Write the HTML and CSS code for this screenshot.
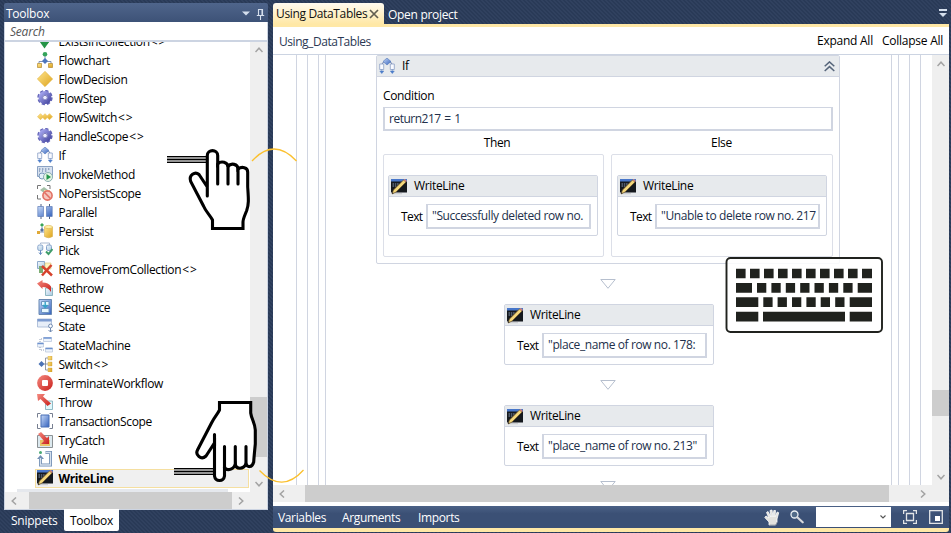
FILE: index.html
```
<!DOCTYPE html>
<html lang="en">
<head>
<meta charset="utf-8">
<title>Using DataTables</title>
<link rel="stylesheet" href="styles.css">
</head>
<body>
<svg class="defs" width="0" height="0" aria-hidden="true">
  <defs>
    <linearGradient id="gold" x1="0" y1="0" x2="1" y2="1"><stop offset="0" stop-color="#ffe58c"/><stop offset="1" stop-color="#dda31d"/></linearGradient>
    <linearGradient id="blue" x1="0" y1="0" x2="1" y2="1"><stop offset="0" stop-color="#c8daf8"/><stop offset="1" stop-color="#3462bd"/></linearGradient>
    <linearGradient id="pale" x1="0" y1="0" x2="1" y2="1"><stop offset="0" stop-color="#f4faff"/><stop offset="1" stop-color="#a9c8e0"/></linearGradient>
    <linearGradient id="red" x1="0" y1="0" x2="1" y2="1"><stop offset="0" stop-color="#f58a80"/><stop offset="1" stop-color="#c9201c"/></linearGradient>
    <linearGradient id="violet" x1="0" y1="0" x2="1" y2="1"><stop offset="0" stop-color="#a5a6ee"/><stop offset="1" stop-color="#4c4da6"/></linearGradient>
    <symbol id="exists" viewBox="0 0 16 16"><path d="M6 0h5v5h2v3l-5 5-5-5 3-3z" fill="#39a457"/><path d="M1.500 7l6 8.500 6-8.500" fill="#259447"/></symbol>
    <symbol id="flowchart" viewBox="0 0 16 16"><path d="M8 4v5M2 12V9.500h12V12" fill="none" stroke="#8192b5"/><circle cx="8" cy="2.300" r="2.300" fill="#35a45b"/><path d="M8 6l3 3-3 3-3-3z" fill="#4b75bd"/><path d="M.5 11.500h4v4h-4zM11.500 11.500h4v4h-4z" fill="url(#gold)" stroke="#b58b32" stroke-width=".7"/></symbol>
    <symbol id="decision" viewBox="0 0 16 16"><path d="M8 .3L15.700 8 8 15.700.3 8z" fill="url(#gold)" stroke="#dfae37" stroke-width=".5"/></symbol>
    <symbol id="gear" viewBox="0 0 16 16"><circle cx="8" cy="7.600" r="6.600" fill="none" stroke="#6566b8" stroke-width="2.200" stroke-dasharray="3.200 1.984"/><circle cx="8" cy="7.600" r="4.500" fill="none" stroke="url(#violet)" stroke-width="4"/><circle cx="8" cy="7.600" r="2.300" fill="#ececff" stroke="#4c4d9e" stroke-width=".7"/></symbol>
    <symbol id="flowswitch" viewBox="0 0 16 16"><path d="M3.500 4.700L6.500 7.700l-3 3-3-3zM8 4.700l3 3-3 3-3-3zM12.500 4.700l3 3-3 3-3-3z" fill="url(#gold)" stroke="#edc35b" stroke-width=".7"/></symbol>
    <symbol id="if" viewBox="0 0 16 16"><path d="M3 6l1.500-2H6M13 6l-1.500-2H10" fill="none" stroke="#6b7fae"/><path d="M8 0l4 3.500L8 7 4 3.500z" fill="url(#blue)" stroke="#5278b9" stroke-width=".6"/><path d="M.7 6h4v5.500h-4zM11.300 6h4v5.500h-4z" fill="#f8faff" stroke="#8b9fc5" stroke-width=".8"/><path d="M2.700 11.500v3M13.300 11.500v3M.8 13h4l-2 2.600zM11.300 13h4l-2 2.600z" fill="#4c7cc9" stroke="#4c7cc9" stroke-width=".5"/></symbol>
    <symbol id="invoke" viewBox="0 0 16 16"><path d="M.5.5h15v10H.5z" fill="#d7e1ef" stroke="#8ba2c3"/><path d="M2 3h2m1 0h2m1 0h2m1 0h2M2 5h1m2 0h1m2 0h2" stroke="#55729e" stroke-dasharray="1 .6"/><circle cx="5" cy="10" r="3" fill="#e4eff9" stroke="#7796b9"/><circle cx="11" cy="11" r="4.500" fill="#e5f4e4" stroke="#8baeb1"/><path d="M9.500 8l4.500 3-4.500 3z" fill="#24964a"/></symbol>
    <symbol id="nopersist" viewBox="0 0 16 16"><path d="M.5 4V.5H4M10 .5h3V4M.5 10v4H4" fill="none" stroke="#777"/><path d="M3 5l4-3 4 3-4 3z" fill="#a3c0a7"/><path d="M7 5h6v9H7z" fill="#f2dca6"/><circle cx="10.500" cy="10.500" r="4.600" fill="#f5c7bd" stroke="#e27063" stroke-width="1.600"/><path d="M7.500 7.500l6 6" stroke="#e27063" stroke-width="1.600"/></symbol>
    <symbol id="parallel" viewBox="0 0 16 16"><path d="M4 0v15M12.500 0v15" stroke="#4c5e82"/><path d="M.8 2.500h5.700v10H.8zM9.500 2.500h5.700v10H9.500z" fill="url(#blue)" stroke="#5f7db8" stroke-width=".7"/></symbol>
    <symbol id="persist" viewBox="0 0 16 16"><path d="M5 4v4M1 9h6" stroke="#7890b5"/><path d="M5 0l2 2-2 2-2-2z" fill="#39a457"/><path d="M5 5l2 2-2 2-2-2z" fill="#536f9c"/><path d="M0 8h3v3H0z" fill="#e0a937"/><path d="M7.500 4v9.500q4 2.500 8 0V4z" fill="url(#gold)" stroke="#d6ae49" stroke-width=".6"/><ellipse cx="11.500" cy="4" rx="4" ry="1.600" fill="#fff0a9" stroke="#d8b24b" stroke-width=".6"/></symbol>
    <symbol id="pick" viewBox="0 0 16 16"><path d="M3.500 2V1h9v2" fill="none" stroke="#a9b9d0"/><rect x=".8" y="3" width="5" height="5.500" rx="1.500" fill="url(#pale)" stroke="#86a4cb"/><rect x="9.500" y="3" width="5" height="5.500" rx="1.500" fill="url(#pale)" stroke="#86a4cb"/><path d="M3.500 8.500v4M2 10.500l1.500 2 1.500-2" fill="none" stroke="#6289be"/><path d="M9 9.500l2.500 2.500 4-5" fill="none" stroke="#3e9c68" stroke-width="2"/></symbol>
    <symbol id="remove" viewBox="0 0 16 16"><path d="M.5.5h7v7h-7z" fill="url(#pale)" stroke="#8eaacc"/><path d="M8 2h6v6H8z" fill="#fff3bc" stroke="#d9c579" stroke-width=".6"/><path d="M2 5h4v7H2z" fill="#7dad73"/><path d="M5 5l10 9.500M14.500 4L5 14.500" stroke="#d6422c" stroke-width="2.500"/></symbol>
    <symbol id="rethrow" viewBox="0 0 16 16"><path d="M8.500 8h7v7.500h-7z" fill="url(#pale)" stroke="#78aab5" stroke-width=".8"/><path d="M0 3.500L5.500 0v2.500q6 0 8.500 4V12q-3-5-8.500-5v2z" fill="url(#red)"/></symbol>
    <symbol id="sequence" viewBox="0 0 16 16"><path d="M2 .5h12.500v15H2z" fill="url(#blue)" stroke="#6888b2"/><path d="M4.500 2.500h7.500v4H4.500zM4.500 9.500h7.500v4H4.500z" fill="#e6f7ff" stroke="#7096c1"/><path d="M8.200 3v5M6 6l2.200 2.500L10.500 6" fill="none" stroke="#34a2c7" stroke-width="1.400"/></symbol>
    <symbol id="state" viewBox="0 0 16 16"><path d="M.5 1h14v8H.5z" fill="#e7eef8" stroke="#a1b4d2" stroke-width=".8"/><path d="M.5 1h14v2.500H.5z" fill="#7c9bd0"/><circle cx="13.500" cy="8" r="1.900" fill="#fff" stroke="#708ab1"/><path d="M13.500 10v4M11.500 12l2 2 2-2" fill="none" stroke="#708ab1"/></symbol>
    <symbol id="statemachine" viewBox="0 0 16 16"><path d="M6.500.5h8v4h-8zM.5 6h6v4h-6zM8.500 11h7v4h-7z" fill="#eef4fc" stroke="#b5c3da" stroke-width=".7"/><path d="M6.500 1h8M.5 6.500h6M8.500 11.500h7" stroke="#6e92cf" stroke-width="1.400"/><path d="M3 5V2h3M3 10v3h5" fill="none" stroke="#8d9bb5" stroke-dasharray="1 1"/></symbol>
    <symbol id="switch" viewBox="0 0 16 16"><path d="M7 8h4M8.500 2v12M8.500 2h3M8.500 14h3" fill="none" stroke="#777f92" stroke-width=".8"/><path d="M4.500 5l3 3-3 3-3-3z" fill="#4b72b5"/><path d="M11 0h4v4h-4zM11 6h4v4h-4zM11 12h4v4h-4z" fill="url(#gold)" stroke="#c69d3d" stroke-width=".4"/></symbol>
    <symbol id="terminate" viewBox="0 0 16 16"><circle cx="8" cy="8" r="7.900" fill="url(#red)"/><rect x="5" y="5" width="6" height="6" rx="1" fill="#fff"/></symbol>
    <symbol id="throw" viewBox="0 0 16 16"><path d="M8.500 7h7v8.500h-7z" fill="#e0f7fb" stroke="#79aab7" stroke-width=".8"/><path d="M0 0h8L6 2.500l8 7-3.500 2.500-7-7L1 7z" fill="url(#red)"/></symbol>
    <symbol id="transaction" viewBox="0 0 16 16"><path d="M3.500.5h-3v4M.5 11v4.500h3M12.500.5h3v4M15.500 11v4.500h-3" fill="none" stroke="#777f91"/><path d="M4 2h8v12H4z" fill="url(#blue)" stroke="#496eb6"/></symbol>
    <symbol id="trycatch" viewBox="0 0 16 16"><path d="M.5 3.500h15v12H.5z" fill="#dce9ef" stroke="#8b9194"/><path d="M3 8h10v6H3z" fill="#eac467"/><path d="M1 2l3-2 6 6 2-2v8H4l3-3z" fill="url(#red)"/></symbol>
    <symbol id="while" viewBox="0 0 16 16"><path d="M3.500 6v8h10V1.500H8.500" fill="none" stroke="#718eb3" stroke-width="3"/><path d="M0 8l3.500-4L7 8z" fill="#718eb3"/><path d="M3.500 7v7h10V1.500H8.500" fill="none" stroke="#d6e1ee" stroke-width="1.300"/><circle cx="3.500" cy="1.500" r="1.500" fill="#48aa72"/></symbol>
    <symbol id="writeline" viewBox="0 0 16 16"><path d="M0 0h16v13.500H0z" fill="#15191e"/><path d="M0 0h16v2.500H0z" fill="#4776ca"/><path d="M1.500 5h7M1.500 7h5" stroke="#8798b1" stroke-dasharray="1.500 .8"/><path d="M2 14.700h9" stroke="#c7c9cd"/><path d="M1 15l1.500-4L12.500 1l2.500 2L5 13z" fill="#f3d77b" stroke="#72592b" stroke-width=".7"/><path d="M12.500 1l1.300-1 2 2-.8 1z" fill="#d98274"/><path d="M1 15l.5-2 1.200 1.200z" fill="#222"/></symbol>
    <symbol id="up" viewBox="0 0 8 6"><path d="M.5 5L4 1.200 7.500 5" fill="none" stroke="#a3a3a3" stroke-width="1.500"/></symbol>
  </defs>
</svg>

<main class="shell">
  <section class="toolbox">
    <header class="panel-head"><span class="panel-title">Toolbox</span>
      <svg class="head-icons" viewBox="0 0 26 14"><path d="M3 4.500h8L7 8.500z" fill="#d5dfed"/><path d="M19.500 8V2.500h4V8M17.800 8.500h7.400M21.500 9v4M23 3v5" fill="none" stroke="#d5dfed" stroke-width="1.100"/></svg>
    </header>
    <div class="search">Search</div>
    <div class="list-area">
      <ul class="list">
        <li><svg><use href="#exists"/></svg><span>ExistsInCollection<span class="generic">&lt;&gt;</span></span></li>
        <li><svg><use href="#flowchart"/></svg><span>Flowchart</span></li>
        <li><svg><use href="#decision"/></svg><span>FlowDecision</span></li>
        <li><svg><use href="#gear"/></svg><span>FlowStep</span></li>
        <li><svg><use href="#flowswitch"/></svg><span>FlowSwitch<span class="generic">&lt;&gt;</span></span></li>
        <li><svg><use href="#gear"/></svg><span>HandleScope<span class="generic">&lt;&gt;</span></span></li>
        <li><svg><use href="#if"/></svg><span>If</span></li>
        <li><svg><use href="#invoke"/></svg><span>InvokeMethod</span></li>
        <li><svg><use href="#nopersist"/></svg><span>NoPersistScope</span></li>
        <li><svg><use href="#parallel"/></svg><span>Parallel</span></li>
        <li><svg><use href="#persist"/></svg><span>Persist</span></li>
        <li><svg><use href="#pick"/></svg><span>Pick</span></li>
        <li><svg><use href="#remove"/></svg><span>RemoveFromCollection<span class="generic">&lt;&gt;</span></span></li>
        <li><svg><use href="#rethrow"/></svg><span>Rethrow</span></li>
        <li><svg><use href="#sequence"/></svg><span>Sequence</span></li>
        <li><svg><use href="#state"/></svg><span>State</span></li>
        <li><svg><use href="#statemachine"/></svg><span>StateMachine</span></li>
        <li><svg><use href="#switch"/></svg><span>Switch<span class="generic">&lt;&gt;</span></span></li>
        <li><svg><use href="#terminate"/></svg><span>TerminateWorkflow</span></li>
        <li><svg><use href="#throw"/></svg><span>Throw</span></li>
        <li><svg><use href="#transaction"/></svg><span>TransactionScope</span></li>
        <li><svg><use href="#trycatch"/></svg><span>TryCatch</span></li>
        <li><svg><use href="#while"/></svg><span>While</span></li>
        <li class="selected"><svg><use href="#writeline"/></svg><span>WriteLine</span></li>
        <li class="category"></li>
      </ul>
      <div class="vbar list-vbar"><svg><use href="#up"/></svg><i></i><svg class="down"><use href="#up"/></svg></div>
    </div>
    <div class="hbar list-hbar"><svg class="left"><use href="#up"/></svg><i></i><svg class="right"><use href="#up"/></svg></div>
    <nav class="panel-tabs"><span class="snippets">Snippets</span><span class="active">Toolbox</span></nav>
  </section>

  <section class="designer">
    <nav class="tabs"><div class="tab"><span>Using DataTables</span><svg viewBox="0 0 10 10"><path d="M1 1l8 8M9 1L1 9" stroke="#625e50" stroke-width="1.700"/></svg></div><span class="other">Open project</span>
      <svg class="tabmenu" viewBox="0 0 8 8"><path d="M0 0h8v2H0zM0 4h8L4 8z" fill="#d5dfed"/></svg></nav>
    <div class="crumbs"><span class="path">Using_DataTables</span><span class="expand">Expand All</span><span class="collapse">Collapse All</span></div>
    <div class="work">
      <div class="canvas">
        <div class="frame f1"><div class="frame f2"><div class="frame f3"><div class="frame f4">
          <article class="ifcard">
            <header class="cardhead"><svg><use href="#if"/></svg><span>If</span><svg class="fold" viewBox="0 0 11 11"><path d="M.7 5.300L5.500.9l4.800 4.400M.7 10L5.500 5.600l4.800 4.400" fill="none" stroke="#56657a" stroke-width="1.500"/></svg></header>
            <div class="ifbody">
              <div class="cond">Condition</div>
              <div class="field formula">return217 = 1</div>
              <div class="branches">
                <div class="then"><h3>Then</h3><div class="branch"><article class="write"><header class="cardhead"><svg><use href="#writeline"/></svg><span>WriteLine</span></header><div class="row"><label>Text</label><div class="field"><span>"Successfully deleted row no.</span></div></div></article></div></div>
                <div class="else"><h3>Else</h3><div class="branch"><article class="write"><header class="cardhead"><svg><use href="#writeline"/></svg><span>WriteLine</span></header><div class="row"><label>Text</label><div class="field"><span>"Unable to delete row no. 217</span></div></div></article></div></div>
              </div>
            </div>
          </article>
          <svg class="arrow" viewBox="0 0 16 10"><path d="M.8.500h14.400L8 9.300z" fill="#fff" stroke="#b6bfce"/></svg>
          <article class="write"><header class="cardhead"><svg><use href="#writeline"/></svg><span>WriteLine</span></header><div class="row"><label>Text</label><div class="field"><span>"place_name of row no. 178:</span></div></div></article>
          <svg class="arrow" viewBox="0 0 16 10"><path d="M.8.500h14.400L8 9.300z" fill="#fff" stroke="#b6bfce"/></svg>
          <article class="write"><header class="cardhead"><svg><use href="#writeline"/></svg><span>WriteLine</span></header><div class="row"><label>Text</label><div class="field"><span>"place_name of row no. 213"</span></div></div></article>
          <svg class="arrow" viewBox="0 0 16 10"><path d="M.8.500h14.400L8 9.300z" fill="#fff" stroke="#b6bfce"/></svg>
        </div></div></div></div>
      </div>
      <div class="vbar work-vbar"><svg><use href="#up"/></svg><i></i><svg class="down"><use href="#up"/></svg></div>
    </div>
    <div class="hbar work-hbar"><svg class="left"><use href="#up"/></svg><i></i><svg class="right"><use href="#up"/></svg></div>
    <footer class="status"><span class="variables">Variables</span><span class="arguments">Arguments</span><span class="imports">Imports</span>
      <svg class="pan" viewBox="0 0 16 17"><path d="M5 16v-3L.8 8.500 2 7l3 2L2.500 3.500 4 2.500 7 8 6 1.500 8 1l1 7 .8-6.500h1.700L11 8l2.200-5 1.500.7L13 10v3l-1.500 3z" fill="#e3e2de" stroke="#fff" stroke-width=".8"/><path d="M5.500 16h6l1.800-3" fill="none" stroke="#777b83" stroke-width=".7"/></svg>
      <svg class="magnifier" viewBox="0 0 14 14"><circle cx="4.500" cy="4.500" r="3.500" fill="#526b89" stroke="#edf1f5" stroke-width="1.300"/><path d="M7.300 7.300l5.400 5" stroke="#d9dadd" stroke-width="2.200" stroke-linecap="round"/></svg>
      <div class="zoom"><svg viewBox="0 0 6 4"><path d="M.5.5L3 3 5.500.5" fill="none" stroke="#555" stroke-width="1.100"/></svg></div>
      <svg class="fit" viewBox="0 0 14 14"><path d="M.6 4V.6H4M10 .6h3.400V4M13.400 10v3.400H10M4 13.400H.6V10M3.500 3.500h7v7h-7z" fill="none" stroke="#e2e4e7" stroke-width="1.300"/></svg>
      <svg class="overview" viewBox="0 0 14 14"><path d="M.7.700h12.600v12.600H.7z" fill="none" stroke="#e2e4e7" stroke-width="1.300"/><path d="M6 6h5v5H6z" fill="#fff"/></svg>
    </footer>
    <div class="goldline"></div>
  </section>
</main>

<svg class="annotations" viewBox="0 0 951 533">
  <path class="curve" d="M252 161Q274 137 296.500 161M259.500 470.500Q282 494 303.500 470"/>
  <path d="M167 159.500h40M174 471.500h40" stroke="#c7c7c7" stroke-width="6"/>
  <path d="M167 156.700h40M167 159.500h40M167 162.300h40M174 468.700h40M174 471.500h40M174 474.300h40" stroke="#000" stroke-width="1.300"/>
  <g class="hand">
    <path d="M207.300 196V155.500C207.300 149 217.700 149 217.700 155.500V164C221 160.500 228 162 228 167V166.500C231 162.500 238 164 238 169C242 166 247.700 167.500 247.700 172V187C248.500 199 249 204 246.700 210.500C244.500 216 243 219 243 222V228.500H212.500V220C210 215 206 212 203.500 206L190.700 181.500C188.500 175 195 171 199 174.500L207.300 187"/>
    <path d="M217.700 164V184M228 167V184M238 169V184"/>
    <path d="M219.500 402.500H250.700V413C251.500 419 255 423 255.300 430V444C254.500 452 254 457 253.700 462C252 468 247.500 467.500 246 464C243 470 236 469 235.300 464.500C233 470.500 226 471 224.500 467V476C223.500 482 215.500 482 214.500 476V443L206 456C201 460.500 195 455 197.500 450L211.500 423C215 416 217 415 219.500 410Z"/>
    <path d="M214.500 434.500V446M224.500 446.500V468M235.300 446.500V465M246 446.500V464"/>
  </g>
  <rect x="726.500" y="258" width="155.500" height="74" rx="4" fill="#fff" fill-opacity=".85" stroke="#20221e" stroke-width="1.900"/>
  <g fill="#20221e">
    <path d="M736 268.700h9.600v9.600h-9.600zM750 268.700h9.600v9.600H750zM764 268.700h9.600v9.600H764zM778 268.700h9.600v9.600H778zM792 268.700h9.600v9.600H792zM806 268.700h9.600v9.600H806zM820 268.700h9.600v9.600H820zM834 268.700h9.600v9.600H834zM848 268.700h9.600v9.600H848zM862 268.700h10v9.600h-10z"/>
    <path d="M736 283h16v9.700h-16zM757 283h9.300v9.700H757zM771.400 283h9.300v9.700h-9.300zM785.800 283h9.300v9.700h-9.300zM800.200 283h9.300v9.700h-9.300zM814.500 283h9.300v9.700h-9.300zM828.900 283h9.300v9.700h-9.300zM843.300 283h9.300v9.700h-9.300zM857.700 283H872v9.700h-14.300z"/>
    <path d="M736 297.300h22.300v9.700H736zM763.300 297.300h9.300v9.700h-9.300zM777.600 297.300h9.300v9.700h-9.300zM792 297.300h9.300v9.700H792zM806.400 297.300h9.300v9.700h-9.300zM820.700 297.300h9.300v9.700h-9.300zM835.200 297.300h9.300v9.700h-9.300zM849.700 297.300H872v9.700h-22.300zM736 311.800h22.300v9.800H736zM763 311.800h82v9.800h-82zM849.700 311.800H872v9.800h-22.300z"/>
  </g>
</svg>
</body>
</html>
```
FILE: styles.css
```
* { box-sizing: border-box; }
body {
  margin: 0;
  width: 951px;
  height: 533px;
  overflow: hidden;
  font: 12px/19px "Open Sans", "Noto Sans", sans-serif;
  letter-spacing: -.35px;
  color: #000;
  white-space: nowrap;
  background: repeating-linear-gradient(45deg, #293a57 0, #293a57 1.400px, #30415f 1.400px, #30415f 2.828px);
}
svg { display: block; flex: none; }
.defs { position: absolute; }
.shell { display: flex; height: 533px; }
.toolbox { width: 264px; margin-left: 4px; padding-top: 3px; }
.panel-head { display: flex; align-items: center; height: 19px; padding: 2px 3px 0 2px; color: #fff; background: linear-gradient(#4f658b, #3d5277); border-radius: 2px 2px 0 0; }
.panel-title { letter-spacing: -.25px; }
.head-icons { width: 26px; height: 14px; margin-left: auto; }
.search { height: 20px; padding-left: 5px; border: solid #ccd4e2; border-width: 0 1px 2px; line-height: 19px; font-style: italic; color: #555; letter-spacing: -.2px; background: #fff; }
.list-area { display: flex; height: 450px; background: #fff; border: solid #ccd4e2; border-width: 0 1px; }
.list { list-style: none; width: 245px; margin: 0; padding: 0; overflow: hidden; display: flex; flex-direction: column; }
.list li { display: flex; align-items: center; height: 19px; flex: none; margin-left: 30px; padding-left: 2px; }
.list li:first-child { margin-top: -10px; }
.list svg { width: 16px; height: 16px; margin: 0 5px 2px 0; }
.list li > span { padding-left: .4px; }
.list .generic { margin-left: 1px; letter-spacing: 1px; }
.list .selected { margin-right: 1px; padding-left: 1px; border: 1px solid #f5dfa0; background: #f0f0f0; font-weight: bold; }
.list .category { height: 3px; margin: 1px 22px 0 12px; background: #e5e8ed; }
.vbar { display: flex; flex-direction: column; align-items: center; width: 17px; background: #efefef; }
.vbar svg, .hbar svg { width: 8px; height: 6px; }
.vbar i { width: 17px; background: #cdcdcd; }
.down { transform: rotate(180deg); }
.left { transform: rotate(-90deg); }
.right { transform: rotate(90deg); }
.list-vbar { padding: 5px 0; }
.list-vbar i { height: 60px; margin: 344px 0 24px; }
.hbar { display: flex; align-items: center; height: 17px; background: #efefef; }
.hbar i { height: 17px; background: #cdcdcd; }
.list-hbar { height: 18px; border: solid #ccd4e2; border-width: 0 1px 1px; padding-left: 5px; }
.list-hbar i { width: 203px; margin: 0 5px 0 11px; }
.panel-tabs { display: flex; height: 22px; color: #fff; line-height: 21px; letter-spacing: -.25px; }
.snippets { width: 60px; padding-left: 7px; }
.panel-tabs .active { width: 55px; height: 22px; margin-top: -1px; padding-top: 1px; text-align: center; color: #000; background: #fff; border-radius: 0 0 2px 2px; }
.designer { width: 676px; margin-left: 5px; padding-top: 3px; }
.tabs { display: flex; height: 21px; color: #fff; line-height: 24px; }
.tab { display: flex; align-items: center; width: 111px; height: 21px; padding-left: 3px; color: #111; background: linear-gradient(#fffbf0, #ffe8a6); border-radius: 3px 3px 0 0; }
.tab span { width: 93px; }
.tab svg { width: 10px; height: 10px; }
.other { padding-left: 4px; letter-spacing: -.3px; }
.tabmenu { width: 8px; height: 8px; margin: 6px 2px 0 auto; }
.crumbs { display: flex; height: 31px; border-top: 3px solid #ffe8a6; border-bottom: 1px solid #ccd4e2; background: #fff; line-height: 28px; letter-spacing: -.25px; }
.path { padding-left: 6px; color: #2b3854; line-height: 30px; letter-spacing: -.45px; }
.expand { margin-left: auto; width: 65px; }
.collapse { width: 67px; }
.work { display: flex; height: 430px; background: #fff; }
.canvas { width: 659px; overflow: hidden; }
.frame { border: solid #d0d5e1; border-width: 0 1px; }
.f1 { height: 430px; margin: 0 11px 0 23px; padding: 0 10px; }
.f2 { padding: 0 10px; }
.f3 { padding: 0 6px; }
.f4 { height: 430px; display: flex; flex-direction: column; align-items: center; padding-right: 1px; }
.f4 > .write { margin-left: 2px; }
.ifcard, .write { flex: none; border: 1px solid #d0d5e1; border-radius: 2px; background: #fff; }
.ifcard { width: 464px; height: 209px; }
.cardhead { display: flex; align-items: center; height: 21px; padding-left: 2px; background: #e7eaed; border-bottom: 1px solid #d0d5e1; line-height: 20px; }
.cardhead svg { width: 16px; height: 16px; margin-right: 7px; }
.write .cardhead svg { margin-top: 1px; }
.write .cardhead span { margin-top: -1px; }
.cardhead .fold { width: 11px; height: 11px; margin: 0 4px 0 auto; }
.ifbody { padding: 9px 6px 0; }
.cond { height: 21px; }
.field { height: 25px; border: 2px solid #d0d5e1; border-top-width: 1px; padding: 0 4px; line-height: 22px; color: #22304b; background: #fff; }
.ifbody > .field { width: 450px; height: 24px; }
.formula { word-spacing: 1px; letter-spacing: -.5px; }
.branches { display: flex; gap: 7px; }
.then { width: 221px; }
.else { width: 222px; }
h3 { margin: 0; height: 23px; padding-left: 7px; font: inherit; line-height: 23px; text-align: center; }
.else h3 { padding: 0 1px 0 0; }
.branch { height: 103px; padding: 20px 4px; border: 1px solid #dcdfe8; border-radius: 2px; }
.else .branch { padding-left: 5px; }
.write { width: 210px; height: 61px; }
.row { display: flex; padding: 7px 6px 0 12px; }
.row label { width: 25px; line-height: 25px; letter-spacing: -.6px; }
.row .field { width: 165px; overflow: hidden; }
.row .field span { display: block; width: 155px; overflow: hidden; letter-spacing: -.4px; }
.arrow { width: 16px; height: 10px; margin: 15px 0; }
.work-vbar { padding: 6px 0 5px; }
.work-vbar i { height: 26px; margin: 323px 0 58px; }
.work-hbar { padding-left: 5px; }
.work-hbar i { width: 584px; margin: 0 30px 0 19px; }
.status { display: flex; align-items: center; height: 26px; padding: 0 6px 0 5px; border-top: 4px solid #fff; color: #fff; background: linear-gradient(#4b6186, #3b5075 35%, #3b5075); }
.variables { width: 64px; flex: none; }
.arguments { width: 76px; flex: none; }
.pan { width: 16px; height: 17px; margin-left: auto; }
.magnifier { width: 14px; height: 14px; margin-left: 10px; }
.zoom { flex: none; width: 75px; height: 20px; margin: 0 12px; padding: 8px 5px; background: #fff; }
.zoom svg { width: 6px; height: 4px; margin-left: auto; }
.fit { width: 14px; height: 14px; }
.overview { width: 14px; height: 14px; margin-left: 12px; }
.goldline { height: 4px; background: #ffe8a6; border-radius: 0 0 3px 3px; }
.annotations { position: absolute; left: 0; top: 0; width: 951px; height: 533px; pointer-events: none; }
.curve { fill: none; stroke: #fbc02e; stroke-width: 1.300; }
.hand { fill: #fff; stroke: #000; stroke-width: 3.100; stroke-linecap: round; }
.hand path:nth-child(even) { fill: none; }
```
